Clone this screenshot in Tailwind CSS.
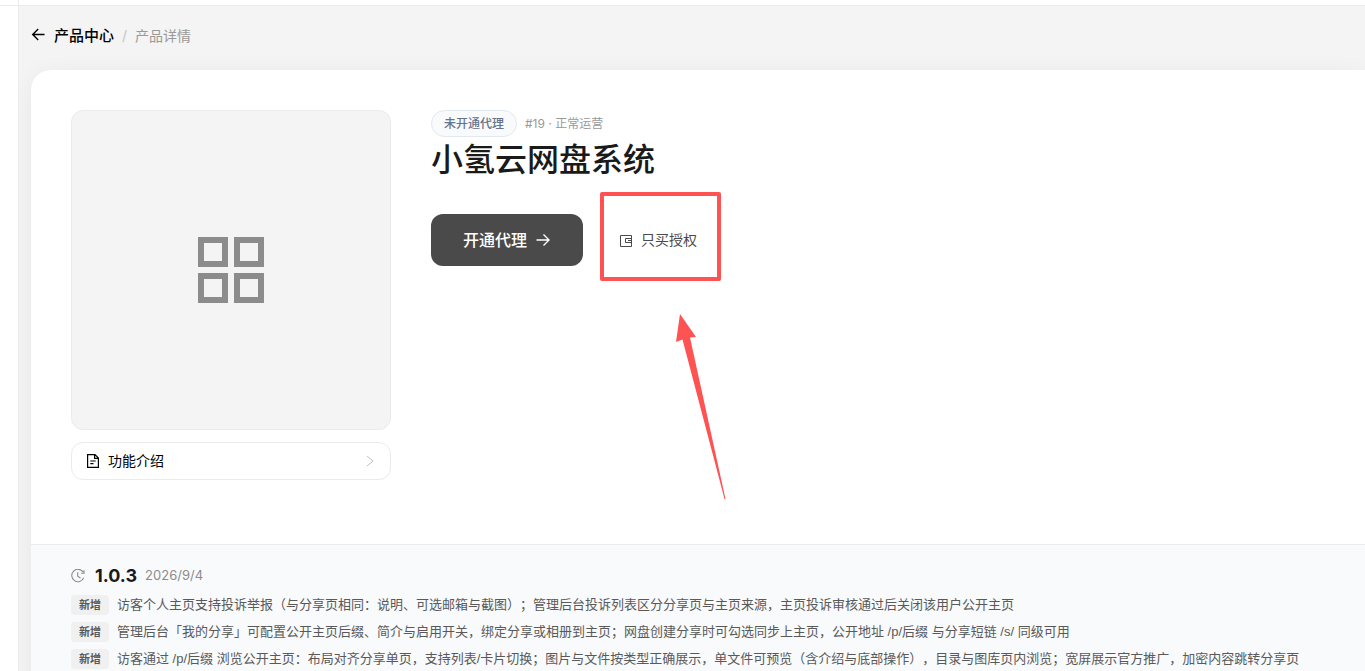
<!DOCTYPE html>
<html lang="zh-CN">
<head>
    <meta charset="UTF-8">
    <meta name="viewport" content="width=device-width, initial-scale=1.0">
    <title>产品详情</title>
    <script src="https://cdn.jsdelivr.net/npm/@tailwindcss/browser@4"></script>
</head>
<body class="bg-white font-['Inter','Noto_Sans_CJK_SC',sans-serif] text-[#1a1a1a]">
    <div class="flex h-screen flex-col overflow-hidden">
        <!-- top bar -->
        <header class="flex h-[6px] shrink-0 border-b border-[#ebebeb]">
            <div class="w-[19px] border-r border-[#ebebeb]"></div>
        </header>

        <div class="flex min-h-0 flex-1">
            <!-- sidebar -->
            <aside class="w-[19px] shrink-0 border-r border-[#ebebeb]"></aside>

            <main class="flex min-w-0 flex-1 flex-col overflow-hidden bg-[#f4f4f4] pl-3">
                <nav class="flex h-16 shrink-0 items-center pb-1 text-sm">
                    <a href="#" class="flex items-center gap-2 font-medium text-black">
                        <svg class="size-[15px]" viewBox="0 0 15 15" fill="none" stroke="currentColor" stroke-width="1.4"><path d="M13.500 6.500H1.700M7.200 1L1.700 6.500l5.500 5.500"/></svg>
                        <span class="text-[15px]">产品中心</span>
                    </a>
                    <span class="mx-2 text-[#c4c4c4]">/</span>
                    <span class="text-[#999]">产品详情</span>
                </nav>

                <div class="flex-1 rounded-tl-[20px] bg-white shadow-[0_4px_24px_rgba(0,0,0,0.06)]">
                    <section class="flex gap-10 px-10 pt-10 pb-16">
                        <div class="flex w-80 shrink-0 flex-col gap-3">
                            <div class="flex h-80 items-center justify-center rounded-xl border border-[#ebebeb] bg-[#f4f4f4]">
                                <svg class="size-20 text-[#8c8c8c]" viewBox="0 0 80 80" fill="none" stroke="currentColor" stroke-width="6"><path d="M10 10h24v24H10zM46 10h24v24H46zM10 46h24v24H10zM46 46h24v24H46z"/></svg>
                            </div>
                            <button class="flex h-[38px] items-center gap-2 rounded-xl border border-[#ebebeb] px-3.5 text-sm text-black">
                                <svg class="size-3.5" viewBox="0 0 14 14" fill="none" stroke="currentColor" stroke-width="1.2"><path d="M1.600.6h7.400l3.400 3.400v9.400H1.600zM8.600.6v3.800h3.800M4.300 7h5.400M4.300 9.600h3.200"/></svg>
                                <span>功能介绍</span>
                                <svg class="ml-auto size-3" viewBox="0 0 12 12" fill="none" stroke="#c0c0c0" stroke-width="1"><path d="M3 1l6 5-6 5"/></svg>
                            </button>
                        </div>

                        <div class="min-w-0 flex-1">
                            <div class="flex items-center gap-2 text-xs">
                                <span class="flex h-[27px] items-center rounded-full border border-[#e2e8f0] bg-[#f8fafc] px-3 font-medium text-[#64748b]">未开通代理</span>
                                <span class="text-[#999]">#19 · 正常运营</span>
                            </div>
                            <h1 class="text-[32px] leading-[45px] font-medium">小氢云网盘系统</h1>
                            <div class="mt-8 flex items-center gap-3">
                                <button class="flex h-[52px] items-center gap-2 rounded-xl bg-[#4a4a4a] px-8 text-base font-medium text-white">
                                    <span>开通代理</span>
                                    <svg class="size-4" viewBox="0 0 16 16" fill="none" stroke="currentColor" stroke-width="1.4"><path d="M1.500 8h12.500M8.500 2.500L14 8l-5.500 5.500"/></svg>
                                </button>
                                <div class="relative">
                                    <button class="flex h-[52px] items-center gap-2 px-6 text-sm text-[#4a4a4a]">
                                        <svg class="size-3.5" viewBox="0 0 14 14" fill="none" stroke="currentColor" stroke-width="1"><path d="M1.500 2.500h11v11h-11zM12.500 5.500h-6v4h6M9 7.500h3.500"/></svg>
                                        <span>只买授权</span>
                                    </button>
                                    <!-- highlight box and pointer -->
                                    <div class="pointer-events-none absolute -top-[22px] left-[5px] h-[89px] w-[121px] rounded-xs border-4 border-[#ff5252]"></div>
                                    <svg class="pointer-events-none absolute top-[100px] left-[80px] h-[186px] w-[52px]" viewBox="0 0 52 186" fill="#ff5252"><path d="M5 0L21 23l-6 .5L50.500 185h-1L7.500 25.500 1 28z"/></svg>
                                </div>
                            </div>
                        </div>
                    </section>

                    <section class="border-t border-[#ebebeb] bg-[#f8fafc] px-10 py-5">
                        <div class="flex h-[22px] items-center">
                            <svg class="size-3.5 text-[#8c8c8c]" viewBox="0 0 14 14" fill="none" stroke="currentColor" stroke-width="1.1"><path d="M12.200 3.200A6.200 6.200 0 1 0 12.700 8.800M13 1.300v2.900h-2.900M6.700 3.200v4.100l2.800 1.700"/></svg>
                            <h2 class="ml-2.5 text-lg font-bold">1.0.3</h2>
                            <time class="ml-2 text-[13px] text-[#8c8c8c]">2026/9/4</time>
                        </div>
                        <ul class="mt-2 flex flex-col gap-[7px] font-['Liberation_Sans','Noto_Sans_CJK_SC',sans-serif] text-[13px] leading-5 whitespace-nowrap text-[#595959] [text-spacing-trim:space-all]">
                            <li class="flex gap-2">
                                <span class="rounded-sm bg-[#f0f0f0] px-2 text-[11px] font-semibold">新增</span>
                                <span>访客个人主页支持投诉举报（与分享页相同：说明、可选邮箱与截图）；管理后台投诉列表区分分享页与主页来源，主页投诉审核通过后关闭该用户公开主页</span>
                            </li>
                            <li class="flex gap-2">
                                <span class="rounded-sm bg-[#f0f0f0] px-2 text-[11px] font-semibold">新增</span>
                                <span>管理后台「我的分享」可配置公开主页后缀、简介与启用开关，绑定分享或相册到主页；网盘创建分享时可勾选同步上主页，公开地址 /p/后缀 与分享短链 /s/ 同级可用</span>
                            </li>
                            <li class="flex gap-2">
                                <span class="rounded-sm bg-[#f0f0f0] px-2 text-[11px] font-semibold">新增</span>
                                <span>访客通过 /p/后缀 浏览公开主页：布局对齐分享单页，支持列表/卡片切换；图片与文件按类型正确展示，单文件可预览（含介绍与底部操作），目录与图库页内浏览；宽屏展示官方推广，加密内容跳转分享页</span>
                            </li>
                        </ul>
                    </section>
                </div>
            </main>
        </div>
    </div>
</body>
</html>
